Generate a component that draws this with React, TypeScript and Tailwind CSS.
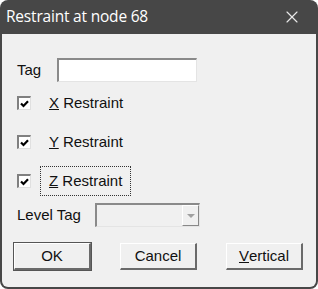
import { X } from 'lucide-react';

const font = { fontFamily: '"Liberation Sans", Arial, sans-serif' };

const Check = () => (
  <div className="w-[14px] h-[14px] bg-white border-t-2 border-l-2 border-t-[#808080] border-l-[#808080] border-b border-r border-b-[#e0e0e0] border-r-[#e0e0e0] flex items-center justify-center">
    <svg width="9" height="8" viewBox="0 0 9 8">
      <path d="M1 3.5 L3.5 6 L8 1.2" stroke="#000" strokeWidth="2.2" fill="none" />
    </svg>
  </div>
);

const Btn = ({ children, strong }: { children: React.ReactNode; strong?: boolean }) => (
  <div className={`w-[79px] h-[29px] ${strong ? 'border border-[#555]' : 'border border-transparent'}`}>
    <div className="w-full h-full border-t border-l border-t-white border-l-white border-b-2 border-r-2 border-b-[#6a6a6a] border-r-[#6a6a6a] bg-[#f0f0f0] flex items-center justify-center text-[15px] text-[#111]">
      {children}
    </div>
  </div>
);

export default function App() {
  return (
    <div className="w-[318px] h-[289px] bg-white" style={font}>
      <div className="w-full h-full bg-[#474747] rounded-t-[8px] rounded-b-[8px] flex flex-col overflow-hidden">
        <div className="h-[34px] flex items-center justify-between pl-[6px] pr-[16px] text-white">
          <span className="text-[15.5px] tracking-[-0.2px]" style={{ fontFamily: '"Open Sans", "Noto Sans", sans-serif' }}>Restraint at node 68</span>
          <X size={20} strokeWidth={1.4} color="#e8e8e8" />
        </div>
        <div className="flex-1 mx-[2px] mb-[2px] bg-[#f0f0f0] rounded-b-[6px] flex flex-col pl-[15px] pr-[12px] pt-[24px] text-[15px] text-[#111]">
          <div className="flex items-center h-[24px]">
            <span className="w-[40px]">Tag</span>
            <div className="w-[140px] h-[24px] bg-white border-t-2 border-l-2 border-t-[#8a8a8a] border-l-[#8a8a8a] border-b border-r border-b-[#e4e4e4] border-r-[#e4e4e4]" />
          </div>
          <div className="flex items-center mt-[14px] h-[14px]">
            <Check />
            <span className="ml-[18px]"><span className="underline">X</span> Restraint</span>
          </div>
          <div className="flex items-center mt-[25px] h-[14px]">
            <Check />
            <span className="ml-[18px]"><span className="underline">Y</span> Restraint</span>
          </div>
          <div className="flex items-center mt-[25px] h-[14px]">
            <Check />
            <span className="ml-[9px] px-[8px] py-[3px] border border-dotted border-[#333]"><span className="underline">Z</span> Restraint</span>
          </div>
          <div className="flex items-center mt-[15px] h-[24px]">
            <span className="w-[78px]">Level Tag</span>
            <div className="w-[105px] h-[24px] bg-[#f0f0f0] border-t-2 border-l-2 border-t-[#8a8a8a] border-l-[#8a8a8a] border-b border-r border-b-[#e4e4e4] border-r-[#e4e4e4] flex justify-end">
              <div className="w-[17px] h-full border-t border-l border-t-white border-l-white border-b border-r border-b-[#888] border-r-[#888] flex items-center justify-center">
                <svg width="8" height="4" viewBox="0 0 8 4"><path d="M0 0 H8 L4 4 Z" fill="#a0a0a0" /></svg>
              </div>
            </div>
          </div>
          <div className="flex justify-between mt-[15px] -ml-[4px]">
            <Btn strong>OK</Btn>
            <Btn>Cancel</Btn>
            <Btn><span className="underline">V</span>ertical</Btn>
          </div>
        </div>
      </div>
    </div>
  );
}
